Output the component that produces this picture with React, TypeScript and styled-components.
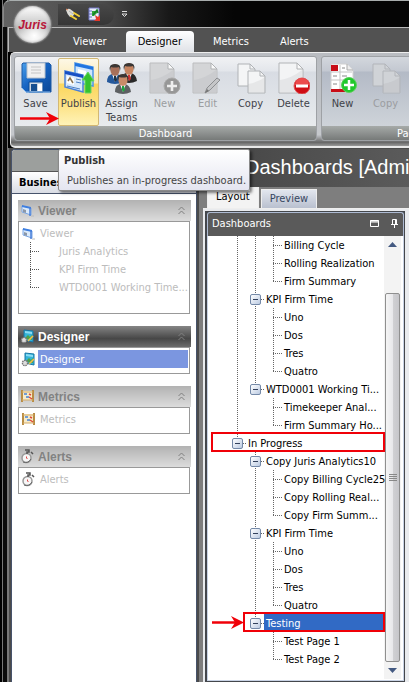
import React from "react";
import styled, { createGlobalStyle, css } from "styled-components";

const uiFont = '"DejaVu Sans Condensed", Tahoma, "Noto Sans", sans-serif';
const arial = '"Liberation Sans", Arial, sans-serif';

const GlobalStyle = createGlobalStyle`
  *, *::before, *::after { box-sizing: border-box; }
  body { margin: 0; background: #000; }
  button { font: inherit; color: inherit; border: 0; padding: 0; background: none; cursor: pointer; }
  svg { display: block; flex: none; }
  ul { list-style: none; margin: 0; padding: 0; }
`;

/* ---------- Window frame ---------- */

const Frame = styled.div`
  position: relative;
  min-height: 100vh;
  overflow: hidden;
  display: flex;
  flex-direction: column;
  padding-left: 8px;
  font: 11px/14px ${uiFont};
  color: #111;
  background: linear-gradient(90deg, #000 2px, #777 2px 3px, #0a0a0a 3px 7px, #777 7px 8px, #000 8px);
`;

const TitleBar = styled.header`
  display: flex;
  align-items: center;
  height: 27px;
  margin-left: -5px;
  padding-left: 54px;
  border-top: 1px solid #a8adad;
  border-left: 1px solid #888;
  border-top-left-radius: 7px;
  background: linear-gradient(90deg, #626262, #4a4a4a 100px, #181818 165px, #050505 230px);
`;

const QuickTools = styled.div`
  display: flex;
  align-items: center;
  gap: 8px;
  width: 56px;
  height: 21px;
  padding-left: 8px;
  border-radius: 0 11px 11px 0;
  background: linear-gradient(#484848, #363636);
`;

const MoreButton = styled.button`
  margin-left: 7px;
`;

const Orb = styled.button`
  position: absolute;
  z-index: 2;
  left: 14px;
  top: 6px;
  width: 37px;
  height: 37px;
  border-radius: 50%;
  background:
    radial-gradient(circle at 55% 80%, #fff, transparent 45%),
    linear-gradient(#fff, #d3d3d3 40%, #b9b9b9 60%, #ededed);
  box-shadow: 0 0 1px 1px #777, inset 0 0 3px #888;
  && {
    color: #b8183a;
    font: italic bold 12px/36px ${arial};
  }
`;

const TabBar = styled.nav`
  display: flex;
  gap: 7px;
  height: 25px;
  padding: 3px 0 0 52px;
  border-top: 1px solid #b9b9b9;
  border-left: 1px solid #b9b9b9;
  background: #525252;
`;

const RibbonTab = styled.button<{ $active?: boolean }>`
  && {
    padding: 0 12px;
    color: #fff;
    font-size: 11px;
    line-height: 21px;
    border-radius: 4px 4px 0 0;
    ${p => p.$active && css`
      color: #000;
      background: linear-gradient(#fff, #dfe2e7);
    `}
  }
`;

/* ---------- Ribbon ---------- */

const Ribbon = styled.section`
  display: flex;
  gap: 4px;
  height: 96px;
  margin-left: 2px;
  padding: 3px 0 5px 3px;
  border-top: 1px solid #eee;
  border-left: 1px solid #eee;
  border-bottom: 2px solid #e8e8e8;
  border-radius: 5px 0 0 5px;
  background: linear-gradient(#b9bcc1, #c5c8cc 88%, #666 96%, #999);
`;

const RibbonGroup = styled.div<{ $cool?: boolean }>`
  position: relative;
  flex: none;
  display: flex;
  flex-direction: column;
  min-width: ${p => (p.$cool ? 176 : 303)}px;
  border: 1px solid #9ea1a5;
  border-radius: 3px;
  overflow: hidden;
  background: ${p => p.$cool
    ? "linear-gradient(#d3d7dd, #c3c8d1 14px, #b3bac6 15px, #d5dade)"
    : "linear-gradient(#f1f2f4, #e3e6eb 14px, #d8dce3 15px, #eceff0)"};
`;

const GroupTools = styled.div`
  flex: 1;
  display: flex;
  gap: 2px;
`;

const GroupCaption = styled.div`
  height: 16px;
  color: #fff;
  line-height: 16px;
  text-align: center;
  background: linear-gradient(#a6aaa8, #707372);
`;

const ToolButton = styled.button<{ $hot?: boolean }>`
  && {
    display: flex;
    flex-direction: column;
    align-items: center;
    gap: 3px;
    width: 41px;
    height: 68px;
    margin-top: 1px;
    padding-top: 3px;
    color: #3f4248;
    border: 1px solid transparent;
    border-radius: 2px;
    &:disabled { color: #9b9da0; }
    ${p => p.$hot && css`
      border-color: #d3b873;
      background: linear-gradient(#fdf8e6, #fbe9b0 24px, #fbd65c 25px, #fde58e 75%, #fff3b8);
    `}
  }
`;

/* ---------- Tooltip and markers ---------- */

const Tooltip = styled.div`
  position: absolute;
  z-index: 3;
  left: 58px;
  top: 149px;
  width: 192px;
  height: 42px;
  padding: 4px 5px;
  color: #444;
  border: 1px solid #8a8a8a;
  border-radius: 2px;
  background: linear-gradient(#fff, #e4e5f0);
  box-shadow: 2px 2px 3px rgba(0, 0, 0, 0.5);
  white-space: nowrap;
  strong { display: block; color: #333; }
  p { margin: 6px 0 0 3px; }
`;

const RibbonArrow = styled.div`
  position: absolute;
  left: 5px;
  top: 54px;
`;

const RowArrow = styled.div`
  position: absolute;
  left: 3px;
  top: 1px;
`;

/* ---------- Workspace ---------- */

const Workspace = styled.main`
  flex: 1;
  display: flex;
  padding: 1px 0 0 2px;
  background: #4b4b4b;
  border-left: 1px solid #777;
`;

const Sidebar = styled.aside`
  flex: none;
  display: flex;
  flex-direction: column;
  width: 186px;
  border: 1px solid #47536b;
  border-bottom: 0;
  border-radius: 4px 4px 0 0;
  background: #fff;
`;

const SidebarTop = styled.div`
  height: 22px;
  border-radius: 3px 3px 0 0;
  border-bottom: 1px solid #555;
  background: #9c9f9d;
`;

const SidebarTitle = styled.h2`
  height: 22px;
  margin: 0 0 6px;
  padding-left: 7px;
  font-size: 11px;
  line-height: 22px;
  color: #000;
  border-bottom: 1px solid #47536b;
  background: linear-gradient(#fff, #d9dce4);
`;

const NavList = styled.div`
  display: flex;
  flex-direction: column;
  gap: 12px;
  padding: 0 5px 0 6px;
`;

const NavHeader = styled.button<{ $active?: boolean }>`
  && {
    display: flex;
    align-items: center;
    gap: 3px;
    width: 100%;
    height: 21px;
    padding: 0 5px 0 2px;
    text-align: left;
    color: ${p => (p.$active ? "#fff" : "#828282")};
    font: bold 12px/20px ${arial};
    background: ${p => p.$active
    ? "linear-gradient(#858585, #474747 60%, #6c6c6c)"
    : "linear-gradient(#b2b2b2, #dcdcdc)"};
    span { flex: 1; }
  }
`;

const NavBody = styled.ul<{ $tall?: boolean }>`
  margin-right: 1px;
  padding: 2px 1px ${p => (p.$tall ? 17 : 5)}px 2px;
  border: 1px solid #999;
  color: #bcbcbc;
`;

const NavItem = styled.li<{ $selected?: boolean }>`
  display: flex;
  align-items: center;
  gap: 2px;
  height: 18px;
  a {
    flex: 1;
    padding: 2px 0 0 2px;
    line-height: 16px;
    color: inherit;
    text-decoration: none;
    white-space: nowrap;
    ${p => p.$selected && css`
      color: #fff;
      background: #7b96e0;
    `}
  }
`;

/* ---------- Document area ---------- */

const Document = styled.section`
  flex: 1;
  min-width: 0;
  display: flex;
  flex-direction: column;
  margin-left: 2px;
  background: #7e7e7e;
`;

const DocumentTitle = styled.h1`
  height: 38px;
  margin: 0;
  padding-left: 46px;
  overflow: hidden;
  color: #fff;
  font: 20px/37px ${arial};
  white-space: nowrap;
  background: linear-gradient(90deg, #444, #5b5b5b);
`;

const DocumentTabs = styled.div`
  display: flex;
  align-items: flex-end;
  gap: 2px;
  height: 21px;
  padding-left: 8px;
`;

const DocumentTab = styled.button<{ $active?: boolean }>`
  && {
    height: ${p => (p.$active ? 21 : 19)}px;
    padding: 0 8px;
    line-height: 16px;
    color: #36465f;
    border: 1px solid #eee;
    border-bottom: 0;
    background: linear-gradient(#e2e6ee, #b9c0cf);
    ${p => p.$active && css`
      padding-bottom: 2px;
      color: #000;
      background: #f3f3f3;
    `}
  }
`;

const DocumentBody = styled.div`
  flex: 1;
  display: flex;
  margin-left: 4px;
  padding: 2px 4px 0 2px;
  border-top: 1px solid #eee;
  background: #e9ebee;
`;

const DockPanel = styled.div`
  flex: 1;
  min-width: 0;
  display: flex;
  flex-direction: column;
  padding: 1px 1px 1px 2px;
  background: #44474c;
`;

const DockHeader = styled.div`
  display: flex;
  align-items: center;
  gap: 12px;
  height: 24px;
  padding: 0 5px 2px 4px;
  color: #fff;
  border: 1px solid #aebbd3;
  border-bottom: 0;
  border-radius: 3px 3px 0 0;
  background: #5a5a5a;
  h2 { flex: 1; margin: 0; font-size: 11px; font-weight: normal; }
`;

const DockBody = styled.div`
  flex: 1;
  display: flex;
  padding: 0 2px 1px 1px;
  border: 1px solid #c9d3e5;
  border-width: 0 1px 1px;
  background: #fff;
`;

const Tree = styled.ul`
  flex: 1;
  min-width: 0;
`;

const TreeRow = styled.li`
  position: relative;
  display: flex;
  height: 18px;
  padding-left: 19px;
`;

const vDots = "repeating-linear-gradient(#666 0 1px, transparent 1px 2px)";
const hDots = "repeating-linear-gradient(90deg, #666 0 1px, transparent 1px 2px)";

type CellKind = "line" | "tee" | "elbow" | "blank" | "boxUp" | "boxThrough";

const cellStyles = {
  blank: css``,
  line: css`background: ${vDots} 9px 0 / 1px 18px no-repeat;`,
  tee: css`background: ${vDots} 9px 0 / 1px 18px no-repeat, ${hDots} 9px 9px / 9px 1px no-repeat;`,
  elbow: css`background: ${vDots} 9px 0 / 1px 9px no-repeat, ${hDots} 9px 9px / 9px 1px no-repeat;`,
  boxUp: css`background: ${vDots} 9px 0 / 1px 9px no-repeat, ${hDots} 9px 9px / 9px 1px no-repeat;`,
  boxThrough: css`background: ${vDots} 9px 0 / 1px 18px no-repeat, ${hDots} 9px 9px / 9px 1px no-repeat;`,
};

const Cell = styled.span<{ $kind: CellKind }>`
  flex: none;
  display: flex;
  align-items: center;
  justify-content: center;
  width: 18px;
  ${p => cellStyles[p.$kind]}
`;

const Expander = styled.button`
  && {
    width: 11px;
    height: 11px;
    border: 1px solid #7489a8;
    border-radius: 2px;
    background:
      linear-gradient(#33415c, #33415c) center / 5px 1px no-repeat,
      linear-gradient(135deg, #fff, #bccbe2);
  }
`;

const Label = styled.span<{ $selected?: boolean }>`
  flex: 1;
  min-width: 0;
  padding: 2px 2px 0;
  line-height: 16px;
  white-space: nowrap;
  color: ${p => (p.$selected ? "#fff" : "#000")};
  background: ${p => (p.$selected ? "#316ac5" : "transparent")};
`;

const RedOutline = styled.span<{ $from: "edge" | "box" }>`
  position: absolute;
  inset: -2px -1px 0 ${p => (p.$from === "edge" ? 2 : 34)}px;
  border: 2px solid #f00008;
  pointer-events: none;
`;

const ScrollBar = styled.div`
  flex: none;
  display: flex;
  flex-direction: column;
  width: 17px;
  background: #f3f3f3;
`;

const ScrollButton = styled.button`
  display: flex;
  align-items: center;
  justify-content: center;
  height: 17px;
`;

const ScrollTrack = styled.div`
  flex: 1;
  display: flex;
  padding-top: 40px;
`;

const ScrollThumb = styled.div`
  flex: 1;
  display: flex;
  align-items: center;
  justify-content: center;
  margin: 0 1px;
  border: 1px solid #8f8f8f;
  border-radius: 2px;
  background: linear-gradient(90deg, #f5f5f5, #e8e8eb 50%, #d0d0d3 55%, #c6c6ca);
`;

/* ---------- Drawings ---------- */

const PlugIcon = () => (
  <svg width="14" height="12" viewBox="0 0 14 12">
    <path d="M0 2q2-2 4-1l4 3q1 2-1 4l-3 1q-3-3-4-7z" fill="#dcdcd8" />
    <path d="M3 3l4 3" stroke="#b4b4b0" />
    <path d="M0 1l2 1" stroke="#e58b5e" />
    <path d="M8 5l5 3M5 8l5 3" stroke="#f2cf35" strokeWidth="2" strokeLinecap="round" />
  </svg>
);

const ReportIcon = () => (
  <svg width="14" height="15" viewBox="0 0 14 15">
    <path d="M1 1h10v12H1z" fill="#e7edfa" stroke="#7478c8" />
    <path d="M1 4h3M1 7h3M1 10h3" stroke="#6670c8" />
    <path d="M4 9V4h5v2L6 9z" fill="#2fa53a" />
    <path d="M5 8l4-5 1 3" stroke="#167f26" strokeWidth="1.5" fill="none" />
    <path d="M7 8l3 2 2-2v6H6l2-2z" fill="#e4382a" />
  </svg>
);

const SaveIcon = () => (
  <svg width="32" height="32" viewBox="0 0 32 32">
    <defs>
      <linearGradient id="disk" x2="1" y2="1"><stop stopColor="#4aa0ec" /><stop offset=".45" stopColor="#1765c4" /><stop offset="1" stopColor="#0b4796" /></linearGradient>
    </defs>
    <path d="M3 1h26l2 2v27H6l-4-4V2z" fill="url(#disk)" stroke="#1d5aa6" />
    <path d="M7 1h18v15H7z" fill="#f0f0f0" stroke="#b7c0ca" />
    <path d="M11 5h10M11 8h10M11 11h10" stroke="#c4c4c4" />
    <path d="M9 20h14v10H9z" fill="#cfd8e2" stroke="#0d4c98" />
    <path d="M11 22h6v7h-6z" fill="#164f91" />
    <path d="M18 22h4v7h-4z" fill="#fff" />
    <path d="M2 26l4 4h24" fill="none" stroke="#7db5ef" />
  </svg>
);

const PublishIcon = ({ size = 32 }: { size?: number }) => (
  <svg width={size} height={size} viewBox="0 0 32 32">
    <path d="M12 1l18 4v19l-18-4z" fill="#cfe6fd" stroke="#4f97e8" strokeWidth="1.5" />
    <path d="M12 1l18 4v3L12 4z" fill="#1f74e0" />
    <path d="M15 7l8 2v5l-8-2z" fill="#fff" />
    <path d="M2 9l18 4v17L2 25z" fill="#d9e9fb" stroke="#4a80d8" strokeWidth="1.5" />
    <path d="M2 9l18 4v3L2 12z" fill="#174fc4" />
    <path d="M4 14l7 2v7l-7-2z" fill="#fff" />
    <path d="M5 19l2-3 3 5" stroke="#8b7350" fill="none" strokeWidth="1.5" />
    <path d="M13 17l5 1M13 20l5 1M4 24l13 3" stroke="#4c7fc4" />
    {size > 20 && <path d="M25 10l6 9h-3v12h-6V18h-3z" fill="#36c22f" stroke="#6bd862" />}
  </svg>
);

const SmallViewerIcon = () => (
  <svg width="15" height="15" viewBox="0 0 15 15">
    <path d="M2 3l9 2v7l-9-3z" fill="#dcebfb" stroke="#7aa6e4" />
    <path d="M2 2l9 2v2L2 4z" fill="#3f7fe0" />
    <path d="M10 4v9" stroke="#4a7fd8" strokeWidth="1.5" />
    <path d="M3 6l3 1v3L3 9z" fill="#8c98a8" />
    <path d="M11 13h3" stroke="#bbb" />
  </svg>
);

const Person = ({ x, y, suit, skin, tie }: { x: number; y: number; suit: string; skin: string; tie: string }) => (
  <g transform={`translate(${x} ${y})`}>
    <path d="M0 18q0-7 5-8h5q5 1 6 8-8 4-16 0z" fill={suit} />
    <path d="M5 10h6l-3 8z" fill="#fff" />
    <path d="M7 12h2l1 4-2 2-1-2z" fill={tie} />
    <ellipse cx="8" cy="6" rx="4.6" ry="6" fill={skin} />
    <path d="M3 7Q1 0 8 0q7 0 5 7l-1-4q-4 1-8 0z" fill="#3a3634" />
  </g>
);

const TeamIcon = () => (
  <svg width="32" height="32" viewBox="0 0 32 32">
    <Person x={15} y={1} suit="#292929" skin="#c68460" tie="#c33" />
    <Person x={1} y={2} suit="#24589c" skin="#a8705a" tie="#234" />
    <Person x={9} y={12} suit="#5d6062" skin="#c98b68" tie="#20a340" />
  </svg>
);

type PageMark = "add" | "edit" | "remove";

const PageIcon = ({ mark, dim }: { mark: PageMark; dim?: boolean }) => (
  <svg width="32" height="32" viewBox="0 0 32 32">
    <path d="M1 1h18l6 6v24H1z" fill={dim ? "#d4d5d7" : "#f3f4f5"} stroke={dim ? "#bcbdbf" : "#b2b4b7"} />
    <path d="M2 18Q14 16 24 8v22H2z" fill="#9aa0a8" opacity=".16" />
    <path d="M19 1v6h6z" fill="#fafafa" stroke="#b0b2b4" />
    {mark === "add" && <g><circle cx="23" cy="24" r="8" fill="#979797" stroke="#aaa" /><path d="M18 24h10M23 19v10" stroke="#eee" strokeWidth="2.6" /></g>}
    {mark === "remove" && <g><circle cx="24" cy="24" r="8" fill="#cf0d14" stroke="#dd5a5c" /><path d="M17 23a7 7 0 0 1 14 0q-7 2-14 0z" fill="#ec4a4c" /><path d="M18 24h12" stroke="#fff" strokeWidth="3" /></g>}
    {mark === "edit" && <g><path d="M13 31l2-5 10-10 3 2-10 10z" fill="#c5c6c8" stroke="#8c8e91" /><path d="M13 31l2-4 2 2z" fill="#777" /></g>}
  </svg>
);

const CopyIcon = ({ dim }: { dim?: boolean }) => {
  const fill = dim ? "#d0d3d7" : "#f4f5f6";
  const line = dim ? "#b2b5ba" : "#b0b3b6";
  return (
    <svg width="32" height="32" viewBox="0 0 32 32">
      <path d="M3 2h12l5 5v17H3z" fill={fill} stroke={line} />
      <path d="M15 2v5h5" fill="none" stroke={line} />
      <path d="M13 9h12l5 5v17H13z" fill={fill} stroke={line} />
      <path d="M13 22Q24 20 30 15v15H13z" fill="#999" opacity=".15" />
      <path d="M25 9v5h5" fill="none" stroke={line} />
    </svg>
  );
};

const NewPageIcon = () => (
  <svg width="32" height="32" viewBox="0 0 32 32">
    <path d="M4 2h16l6 6v22H4z" fill="#fff" stroke="#d0d0d0" />
    <path d="M4 3h7v6H4z" fill="#c80d18" />
    <path d="M4 27h22v3H4z" fill="#c80d18" />
    <path d="M13 3v24M4 10h21M4 18h21" stroke="#c4c4c4" />
    <path d="M6 14h4M15 6h3M15 14h5M6 22h4" stroke="#888" />
    <path d="M20 2v6h6" fill="#eee" stroke="#aaa" />
    <circle cx="22" cy="23" r="7.5" fill="#20c82c" stroke="#5ecf5e" />
    <path d="M17 23h10M22 18v10" stroke="#fff" strokeWidth="2.5" />
  </svg>
);

const DesignIcon = () => (
  <svg width="15" height="15" viewBox="0 0 15 15">
    <path d="M4 1l9 1v11l-9-2z" fill="#35b5d8" stroke="#1976a6" />
    <path d="M5 2l7 1v2L5 4z" fill="#8ddcf5" />
    <path d="M5 9l3-3 2 2 2-2v5l-7-1z" fill="#4ba24b" />
    <path d="M8 12l5-5" stroke="#f1bd4d" strokeWidth="1.6" />
    <circle cx="4" cy="11" r="2.6" fill="#ddd" stroke="#777" strokeDasharray="1.5 .7" strokeWidth="1.4" />
  </svg>
);

const MetricsIcon = () => (
  <svg width="15" height="15" viewBox="0 0 15 15">
    <path d="M2 2h11v9H2z" fill="#f7ebc9" />
    <path d="M2 1v12M13 1v12" stroke="#b98d45" strokeWidth="2" />
    <path d="M2 3h11M2 11h11" stroke="#d5ac68" />
    <path d="M4 5h3M6 8h3" stroke="#4684d6" strokeWidth="1.5" />
    <path d="M9 5l2 1M9 8l3 2" stroke="#df4938" strokeWidth="1.5" />
  </svg>
);

const WatchIcon = () => (
  <svg width="15" height="15" viewBox="0 0 15 15">
    <circle cx="6.5" cy="9" r="4.5" fill="#f7f7f7" stroke="#999" strokeWidth="1.5" />
    <path d="M5 1h4v2H7v2M11 3l2 2" fill="none" stroke="#555" strokeWidth="1.5" />
    <path d="M6.5 7.5V9l1 1" fill="none" stroke="#d44" />
    <path d="M3 13q5 2 8-3" fill="none" stroke="#666" />
  </svg>
);

const DoubleChevron = () => (
  <svg width="9" height="9" viewBox="0 0 9 9" fill="none" stroke="#808080">
    <path d="M1.5 4l3-3 3 3M1.5 8l3-3 3 3" />
  </svg>
);

const ArrowRight = ({ length }: { length: number }) => (
  <svg width={length} height="15" viewBox={`0 0 ${length} 15`}>
    <path d={`M0 7.5H${length - 8}`} stroke="#f00008" strokeWidth="2.5" />
    <path d={`M${length - 13} 1L${length} 7.5L${length - 13} 14L${length - 9} 7.5Z`} fill="#f00008" />
  </svg>
);

const Triangle = ({ down }: { down?: boolean }) => (
  <svg width="9" height="5" viewBox="0 0 9 5">
    <path d={down ? "M0 0h9L4.5 5z" : "M0 5h9L4.5 0z"} fill="#435981" />
  </svg>
);

const BranchLines = ({ last }: { last: boolean }) => (
  <svg width="34" height="18" viewBox="0 0 34 18" fill="none" stroke="#555" strokeDasharray="1 1">
    <path d={last ? "M9.5 0v10M9 9.5h9" : "M9.5 0v18M9 9.5h9"} />
  </svg>
);

/* ---------- Data ---------- */

const tree: { cells: CellKind[]; label: string; mark?: "edge" | "box"; selected?: boolean }[] = [
  { cells: ["line", "line", "tee"], label: "Billing Cycle" },
  { cells: ["line", "line", "tee"], label: "Rolling Realization" },
  { cells: ["line", "line", "elbow"], label: "Firm Summary" },
  { cells: ["line", "boxThrough"], label: "KPI Firm Time" },
  { cells: ["line", "line", "tee"], label: "Uno" },
  { cells: ["line", "line", "tee"], label: "Dos" },
  { cells: ["line", "line", "tee"], label: "Tres" },
  { cells: ["line", "line", "elbow"], label: "Quatro" },
  { cells: ["line", "boxUp"], label: "WTD0001 Working Ti..." },
  { cells: ["line", "blank", "tee"], label: "Timekeeper Anal..." },
  { cells: ["line", "blank", "elbow"], label: "Firm Summary Ho..." },
  { cells: ["boxUp"], label: "In Progress", mark: "edge" },
  { cells: ["blank", "boxThrough"], label: "Copy Juris Analytics10" },
  { cells: ["blank", "line", "tee"], label: "Copy Billing Cycle25" },
  { cells: ["blank", "line", "tee"], label: "Copy Rolling Real..." },
  { cells: ["blank", "line", "elbow"], label: "Copy Firm Summ..." },
  { cells: ["blank", "boxThrough"], label: "KPI Firm Time" },
  { cells: ["blank", "line", "tee"], label: "Uno" },
  { cells: ["blank", "line", "tee"], label: "Dos" },
  { cells: ["blank", "line", "tee"], label: "Tres" },
  { cells: ["blank", "line", "elbow"], label: "Quatro" },
  { cells: ["blank", "boxUp"], label: "Testing", mark: "box", selected: true },
  { cells: ["blank", "blank", "tee"], label: "Test Page 1" },
  { cells: ["blank", "blank", "elbow"], label: "Test Page 2" },
];

const sections = [
  { name: "Viewer", icon: <SmallViewerIcon />, children: ["Juris Analytics", "KPI Firm Time", "WTD0001 Working Time..."] },
  { name: "Designer", icon: <DesignIcon />, active: true, children: [] },
  { name: "Metrics", icon: <MetricsIcon />, children: [] },
  { name: "Alerts", icon: <WatchIcon />, children: [] },
];

export default function App() {
  return (
    <>
      <GlobalStyle />
      <Frame>
        <Orb aria-label="Juris menu">Juris</Orb>
        <TitleBar>
          <QuickTools>
            <button aria-label="Connect"><PlugIcon /></button>
            <button aria-label="Export"><ReportIcon /></button>
          </QuickTools>
          <MoreButton aria-label="Customize toolbar">
            <svg width="7" height="7" viewBox="0 0 7 7" fill="none" stroke="#ddd"><path d="M1 .5h5M1 3l2.5 2.5L6 3z" /></svg>
          </MoreButton>
        </TitleBar>
        <TabBar>
          <RibbonTab>Viewer</RibbonTab>
          <RibbonTab $active>Designer</RibbonTab>
          <RibbonTab>Metrics</RibbonTab>
          <RibbonTab>Alerts</RibbonTab>
        </TabBar>
        <Ribbon>
          <RibbonGroup>
            <GroupTools>
              <ToolButton><SaveIcon />Save</ToolButton>
              <ToolButton $hot><PublishIcon />Publish</ToolButton>
              <ToolButton><TeamIcon />Assign Teams</ToolButton>
              <ToolButton disabled><PageIcon mark="add" dim />New</ToolButton>
              <ToolButton disabled><PageIcon mark="edit" dim />Edit</ToolButton>
              <ToolButton><CopyIcon />Copy</ToolButton>
              <ToolButton><PageIcon mark="remove" />Delete</ToolButton>
            </GroupTools>
            <GroupCaption>Dashboard</GroupCaption>
            <RibbonArrow><ArrowRight length={39} /></RibbonArrow>
          </RibbonGroup>
          <RibbonGroup $cool>
            <GroupTools>
              <ToolButton><NewPageIcon />New</ToolButton>
              <ToolButton disabled><CopyIcon dim />Copy</ToolButton>
            </GroupTools>
            <GroupCaption>Page</GroupCaption>
          </RibbonGroup>
        </Ribbon>
        <Tooltip role="tooltip">
          <strong>Publish</strong>
          <p>Publishes an in-progress dashboard.</p>
        </Tooltip>
        <Workspace>
          <Sidebar>
            <SidebarTop />
            <SidebarTitle>Business</SidebarTitle>
            <NavList>
              {sections.map(s => (
                <section key={s.name}>
                  <NavHeader $active={s.active}>{s.icon}<span>{s.name}</span><DoubleChevron /></NavHeader>
                  <NavBody $tall={s.children.length > 0}>
                    <NavItem $selected={s.active}>{s.icon}<a href="#section">{s.name}</a></NavItem>
                    {s.children.map((c, i) => (
                      <NavItem key={c}><BranchLines last={i === s.children.length - 1} /><a href="#item">{c}</a></NavItem>
                    ))}
                  </NavBody>
                </section>
              ))}
            </NavList>
          </Sidebar>
          <Document>
            <DocumentTitle>Dashboards [Administrator]</DocumentTitle>
            <DocumentTabs>
              <DocumentTab $active>Layout</DocumentTab>
              <DocumentTab>Preview</DocumentTab>
            </DocumentTabs>
            <DocumentBody>
              <DockPanel>
                <DockHeader>
                  <h2>Dashboards</h2>
                  <button aria-label="Maximize">
                    <svg width="9" height="7" viewBox="0 0 9 7"><path d="M.5.5h8v6h-8zM0 2h9M0 1h9" fill="none" stroke="#fff" /></svg>
                  </button>
                  <button aria-label="Pin">
                    <svg width="7" height="9" viewBox="0 0 7 9"><path d="M1.5 5V.5h4V5M4.5 1v4M0 5.5h7M3.5 6v3" fill="none" stroke="#fff" /></svg>
                  </button>
                </DockHeader>
                <DockBody>
                  <Tree>
                    {tree.map((row, i) => (
                      <TreeRow key={i}>
                        {row.cells.map((kind, c) => (
                          <Cell key={c} $kind={kind}>{kind.startsWith("box") && <Expander aria-label={`Collapse ${row.label}`} />}</Cell>
                        ))}
                        <Label $selected={row.selected}>{row.label}</Label>
                        {row.mark && <RedOutline $from={row.mark} />}
                        {row.mark === "box" && <RowArrow><ArrowRight length={32} /></RowArrow>}
                      </TreeRow>
                    ))}
                  </Tree>
                  <ScrollBar>
                    <ScrollButton aria-label="Scroll up"><Triangle /></ScrollButton>
                    <ScrollTrack>
                      <ScrollThumb>
                        <svg width="8" height="8" viewBox="0 0 8 8" stroke="#888"><path d="M0 .5h8M0 2.5h8M0 4.5h8M0 6.5h8" /></svg>
                      </ScrollThumb>
                    </ScrollTrack>
                    <ScrollButton aria-label="Scroll down"><Triangle down /></ScrollButton>
                  </ScrollBar>
                </DockBody>
              </DockPanel>
            </DocumentBody>
          </Document>
        </Workspace>
      </Frame>
    </>
  );
}
